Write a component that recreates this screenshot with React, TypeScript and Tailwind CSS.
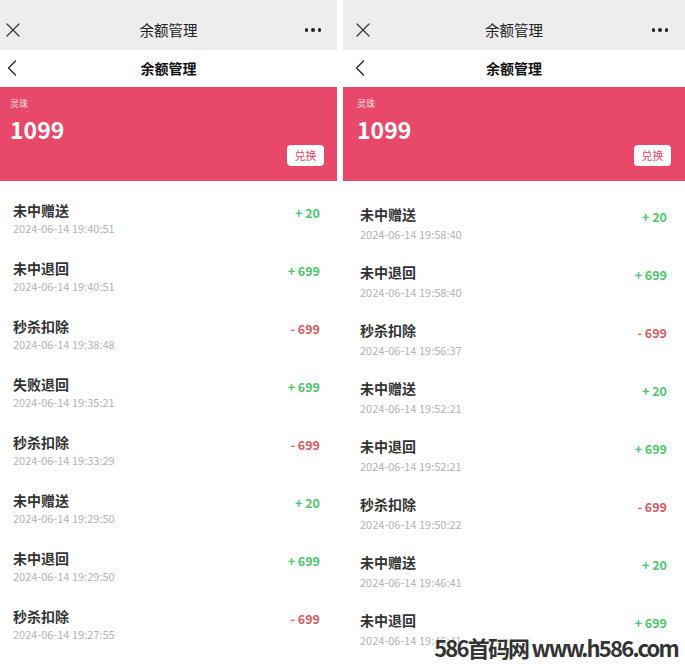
import { X, ChevronLeft } from "lucide-react";

type Row = { title: string; time: string; amount: string; plus: boolean };

const left: Row[] = [
  { title: "未中赠送", time: "2024-06-14 19:40:51", amount: "+ 20", plus: true },
  { title: "未中退回", time: "2024-06-14 19:40:51", amount: "+ 699", plus: true },
  { title: "秒杀扣除", time: "2024-06-14 19:38:48", amount: "- 699", plus: false },
  { title: "失败退回", time: "2024-06-14 19:35:21", amount: "+ 699", plus: true },
  { title: "秒杀扣除", time: "2024-06-14 19:33:29", amount: "- 699", plus: false },
  { title: "未中赠送", time: "2024-06-14 19:29:50", amount: "+ 20", plus: true },
  { title: "未中退回", time: "2024-06-14 19:29:50", amount: "+ 699", plus: true },
  { title: "秒杀扣除", time: "2024-06-14 19:27:55", amount: "- 699", plus: false },
];

const right: Row[] = [
  { title: "未中赠送", time: "2024-06-14 19:58:40", amount: "+ 20", plus: true },
  { title: "未中退回", time: "2024-06-14 19:58:40", amount: "+ 699", plus: true },
  { title: "秒杀扣除", time: "2024-06-14 19:56:37", amount: "- 699", plus: false },
  { title: "未中赠送", time: "2024-06-14 19:52:21", amount: "+ 20", plus: true },
  { title: "未中退回", time: "2024-06-14 19:52:21", amount: "+ 699", plus: true },
  { title: "秒杀扣除", time: "2024-06-14 19:50:22", amount: "- 699", plus: false },
  { title: "未中赠送", time: "2024-06-14 19:46:41", amount: "+ 20", plus: true },
  { title: "未中退回", time: "2024-06-14 19:46:41", amount: "+ 699", plus: true },
];

function Dots() {
  return (
    <div className="flex gap-[3px]">
      <span className="size-[3.5px] rounded-full bg-[#222]" />
      <span className="size-[3.5px] rounded-full bg-[#222]" />
      <span className="size-[3.5px] rounded-full bg-[#222]" />
    </div>
  );
}

function Phone({ rows, wide }: { rows: Row[]; wide?: boolean }) {
  return (
    <div className={wide ? "w-[342px] shrink-0" : "w-[337px] shrink-0"}>
      {/* wechat capsule bar */}
      <div
        className={
          "relative flex h-[50px] items-center justify-between bg-[#ededed] pt-[10px] " +
          (wide ? "pl-[8px] pr-[17px]" : "pl-[1px] pr-[16px]")
        }
      >
        <X className="size-[24px] text-[#333]" strokeWidth={1.2} />
        <span className="absolute inset-x-0 top-[20px] text-center text-[14.5px] leading-[20px] text-[#222]">
          余额管理
        </span>
        <Dots />
      </div>
      {/* page nav */}
      <div className={"relative flex h-[37px] items-center bg-white pb-[2px] " + (wide ? "pl-[3px]" : "pl-0")}>
        <ChevronLeft className={"size-[28px] text-[#222] " + (wide ? "" : "-ml-[2px]")} strokeWidth={1.1} />
        <span className="absolute inset-x-0 top-[8px] text-center text-[14px] font-bold leading-[20px] text-[#111]">
          余额管理
        </span>
      </div>
      <div
        className={
          "flex h-[94px] flex-col bg-[#e8496a] pt-[12px] " +
          (wide ? "pl-[14px] pr-[14px]" : "pl-[10px] pr-[13px]")
        }
      >
        <span className="text-[9px] leading-[10px] text-white/85">灵珠</span>
        <span className="mt-[7px] text-[23px] font-bold leading-[26px] text-white">1099</span>
        <div className="mt-[3px] flex justify-end">
          <span className="flex h-[21px] w-[37px] items-center justify-center rounded-[4px] bg-white text-[11px] text-[#e8496a]">
            兑换
          </span>
        </div>
      </div>
      <div className={wide ? "pl-[17px] pr-[18px] pt-[23px]" : "pl-[13px] pr-[17px] pt-[19px]"}>
        {rows.map((r, i) => (
          <div key={i} className="flex h-[58px] items-start justify-between">
            <div className="flex flex-col">
              <span className="text-[14px] font-bold leading-[20px] text-[#333]">{r.title}</span>
              <span className={"text-[11px] leading-[16px] text-[#b3b3b3] " + (wide ? "mt-[2px]" : "")}>
                {r.time}
              </span>
            </div>
            <span
              className={
                "pt-[5px] text-[12.5px] font-semibold leading-[16px] " +
                (r.plus ? "text-[#4cc76a]" : "text-[#dc5a5e]")
              }
            >
              {r.amount}
            </span>
          </div>
        ))}
      </div>
    </div>
  );
}

export default function App() {
  return (
    <div
      className="relative flex h-[665px] w-[685px] gap-[6px] overflow-hidden bg-white"
      style={{ fontFamily: '"Noto Sans CJK SC", "Noto Sans", sans-serif' }}
    >
      <Phone rows={left} />
      <Phone rows={right} wide />
      <div className="absolute right-[7px] top-[632px] text-[22px] font-bold leading-[30px] tracking-[-1.8px] text-[#333] [text-shadow:0_0_3px_white]">
        586首码网 www.h586.com
      </div>
    </div>
  );
}
